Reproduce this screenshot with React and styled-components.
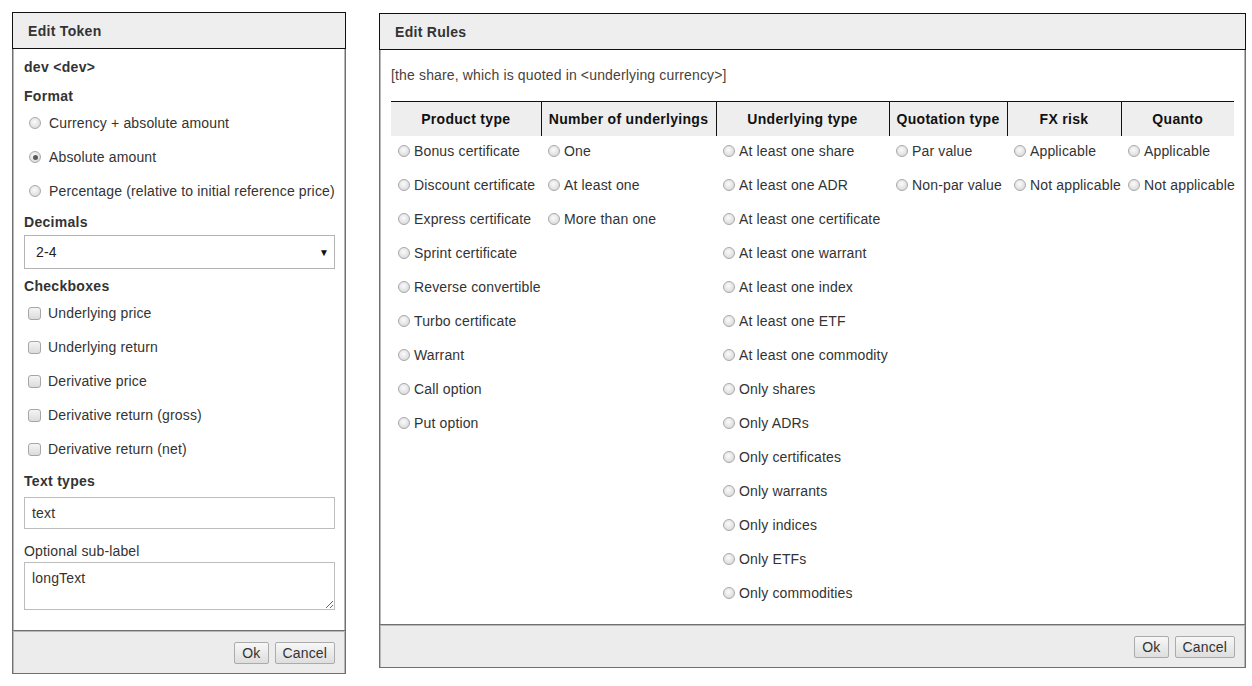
import React from "react";
import styled, { createGlobalStyle } from "styled-components";

const GlobalStyle = createGlobalStyle`
  body {
    margin: 0;
    background: #fff;
    font-family: "Liberation Sans", Arial, sans-serif;
    font-size: 14px;
    letter-spacing: 0.15px;
    color: #333;
  }
`;

/* layout */
const Page = styled.div`
  display: flex;
  align-items: flex-start;
  gap: 33px;
  padding: 12px 0 0 12px;
`;

const Panel = styled.section`
  display: flex;
  flex-direction: column;
  box-sizing: border-box;
  width: ${(p) => p.$width}px;
  height: ${(p) => p.$height}px;
  margin-top: ${(p) => p.$offset || 0}px;
`;

const Header = styled.header`
  box-sizing: border-box;
  height: 37px;
  border: 1px solid #111;
  background: #eeeeee;
  padding-left: 15px;
  display: flex;
  align-items: center;
  font-weight: bold;
  font-size: 14px;
  letter-spacing: 0.3px;
  color: #333;
`;

const Body = styled.div`
  flex: 1;
  display: flex;
  flex-direction: column;
  border-left: 1px solid #707070;
  border-right: 1px solid #707070;
  box-shadow: inset 1px 0 0 #b8b8b8, inset -1px 0 0 #b8b8b8;
  padding: ${(p) => p.$pad};
`;

const Footer = styled.footer`
  box-sizing: border-box;
  height: 44px;
  border: 1px solid #707070;
  box-shadow: inset 0 1px 0 #b8b8b8, inset 1px 0 0 #b8b8b8, inset -1px 0 0 #b8b8b8;
  background: #ececec;
  display: flex;
  justify-content: flex-end;
  align-items: flex-start;
  gap: 6px;
  padding: 11px 10px 0 0;
`;

const Button = styled.button`
  box-sizing: border-box;
  height: 22px;
  padding: 0 7px;
  border: 1px solid #ababab;
  border-radius: 2px;
  background: linear-gradient(#f7f7f7, #dedede);
  font-family: "Liberation Sans", Arial, sans-serif;
  font-size: 14px;
  letter-spacing: 0.15px;
  color: #333;
  line-height: 20px;
`;

/* form parts */
const Title = styled.div`
  font-weight: bold;
  letter-spacing: 0.3px;
  line-height: 20px;
  margin-top: ${(p) => p.$mt || 0}px;
  color: #333;
`;

const Caption = styled.div`
  line-height: 20px;
  margin-top: 12px;
  color: #333;
`;

const OptionRow = styled.label`
  display: flex;
  align-items: center;
  height: 34px;
  padding-left: ${(p) => p.$indent}px;
  gap: ${(p) => p.$gap}px;
  color: #333;
`;

const Radio = styled.span`
  position: relative;
  box-sizing: border-box;
  flex: none;
  width: 12px;
  height: 12px;
  border-radius: 50%;
  border: 1px solid #a9a9a9;
  background: radial-gradient(circle at 45% 40%, #fbfbfb 0%, #e2e2e2 60%, #cfcfcf 100%);

  &::after {
    content: "";
    display: ${(p) => (p.$checked ? "block" : "none")};
    position: absolute;
    left: 2.5px;
    top: 2.5px;
    width: 5px;
    height: 5px;
    border-radius: 50%;
    background: #5a5a5a;
  }
`;

const Check = styled.span`
  box-sizing: border-box;
  flex: none;
  width: 13px;
  height: 13px;
  border-radius: 3px;
  border: 1px solid #a6a6a6;
  background: linear-gradient(#f4f4f4, #dcdcdc);
`;

const Select = styled.div`
  box-sizing: border-box;
  margin-top: 3px;
  height: 34px;
  border: 1px solid #b4b4b4;
  padding: 0 5px 0 11px;
  display: flex;
  align-items: center;
  justify-content: space-between;
  color: #222;

  span {
    font-size: 10px;
    color: #111;
  }
`;

const Input = styled.input`
  box-sizing: border-box;
  margin-top: 6px;
  height: 32px;
  width: 100%;
  border: 1px solid #bdbdbd;
  padding: 0 7px;
  font-family: "Liberation Sans", Arial, sans-serif;
  font-size: 14px;
  letter-spacing: 0.15px;
  color: #333;
  outline: none;
`;

const TextArea = styled.textarea`
  box-sizing: border-box;
  margin-top: 1px;
  height: 48px;
  width: 100%;
  border: 1px solid #bdbdbd;
  padding: 6px 7px;
  font-family: "Liberation Sans", Arial, sans-serif;
  font-size: 14px;
  letter-spacing: 0.15px;
  line-height: 18px;
  color: #333;
  outline: none;
`;

/* rules table */
const Intro = styled.div`
  line-height: 20px;
  color: #4a3f3a;
`;

const Table = styled.table`
  margin-top: 16px;
  width: 843px;
  border-collapse: collapse;
  table-layout: fixed;
  border-top: 1px solid #111;
`;

const Th = styled.th`
  height: 34px;
  padding: 0;
  background: #eeeeee;
  font-weight: bold;
  font-size: 14px;
  letter-spacing: 0.3px;
  color: #111;
  text-align: center;
  border-left: ${(p) => (p.$first ? "none" : "1px solid #111")};
`;

const Td = styled.td`
  vertical-align: top;
  padding: 0;
`;

const Cell = styled.div`
  display: flex;
  align-items: center;
  gap: 4px;
  height: 34px;
  padding: 6px 0 10px 7px;
  line-height: 18px;
  box-sizing: border-box;
  white-space: nowrap;
  color: #333;
`;

const columns = [
  {
    title: "Product type",
    width: 150,
    items: [
      "Bonus certificate",
      "Discount certificate",
      "Express certificate",
      "Sprint certificate",
      "Reverse convertible",
      "Turbo certificate",
      "Warrant",
      "Call option",
      "Put option",
    ],
  },
  { title: "Number of underlyings", width: 175, items: ["One", "At least one", "More than one"] },
  {
    title: "Underlying type",
    width: 173,
    items: [
      "At least one share",
      "At least one ADR",
      "At least one certificate",
      "At least one warrant",
      "At least one index",
      "At least one ETF",
      "At least one commodity",
      "Only shares",
      "Only ADRs",
      "Only certificates",
      "Only warrants",
      "Only indices",
      "Only ETFs",
      "Only commodities",
    ],
  },
  { title: "Quotation type", width: 118, items: ["Par value", "Non-par value"] },
  { title: "FX risk", width: 114, items: ["Applicable", "Not applicable"] },
  { title: "Quanto", width: 113, items: ["Applicable", "Not applicable"] },
];

const formats = [
  { label: "Currency + absolute amount" },
  { label: "Absolute amount", checked: true },
  { label: "Percentage (relative to initial reference price)" },
];

const checkboxes = [
  "Underlying price",
  "Underlying return",
  "Derivative price",
  "Derivative return (gross)",
  "Derivative return (net)",
];

function EditToken() {
  return (
    <Panel $width={334} $height={662}>
      <Header>Edit Token</Header>
      <Body $pad="8px 10px 0 11px">
        <Title>dev &lt;dev&gt;</Title>
        <Title $mt={9}>Format</Title>
        {formats.map((f) => (
          <OptionRow key={f.label} $indent={5} $gap={8}>
            <Radio $checked={f.checked} />
            {f.label}
          </OptionRow>
        ))}
        <Title $mt={4}>Decimals</Title>
        <Select>
          2-4<span>▼</span>
        </Select>
        <Title $mt={7}>Checkboxes</Title>
        {checkboxes.map((c) => (
          <OptionRow key={c} $indent={4} $gap={7}>
            <Check />
            {c}
          </OptionRow>
        ))}
        <Title $mt={5}>Text types</Title>
        <Input defaultValue="text" />
        <Caption>Optional sub-label</Caption>
        <TextArea defaultValue="longText" />
      </Body>
      <Footer>
        <Button>Ok</Button>
        <Button>Cancel</Button>
      </Footer>
    </Panel>
  );
}

function EditRules() {
  return (
    <Panel $width={867} $height={655} $offset={1}>
      <Header>Edit Rules</Header>
      <Body $pad="15px 10px 0 11px">
        <Intro>[the share, which is quoted in &lt;underlying currency&gt;]</Intro>
        <Table>
          <colgroup>
            {columns.map((c) => (
              <col key={c.title} style={{ width: c.width }} />
            ))}
          </colgroup>
          <thead>
            <tr>
              {columns.map((c, i) => (
                <Th key={c.title} $first={i === 0}>
                  {c.title}
                </Th>
              ))}
            </tr>
          </thead>
          <tbody>
            <tr>
              {columns.map((c) => (
                <Td key={c.title}>
                  {c.items.map((item) => (
                    <Cell key={item}>
                      <Radio />
                      {item}
                    </Cell>
                  ))}
                </Td>
              ))}
            </tr>
          </tbody>
        </Table>
      </Body>
      <Footer>
        <Button>Ok</Button>
        <Button>Cancel</Button>
      </Footer>
    </Panel>
  );
}

export default function App() {
  return (
    <>
      <GlobalStyle />
      <Page>
        <EditToken />
        <EditRules />
      </Page>
    </>
  );
}
